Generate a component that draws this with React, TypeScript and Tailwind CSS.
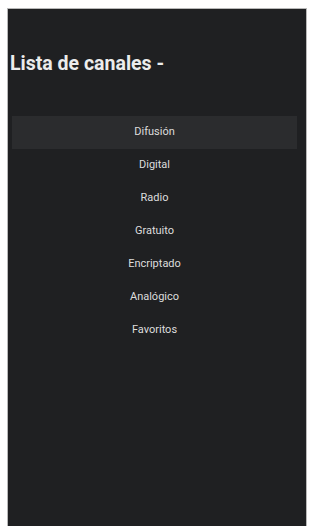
import React from "react";

const channels = [
  "Difusión",
  "Digital",
  "Radio",
  "Gratuito",
  "Encriptado",
  "Analógico",
  "Favoritos",
];

export default function App() {
  const selected = 0;

  return (
    <div className="w-[310px] h-[526px] bg-white overflow-hidden font-['Roboto',sans-serif]">
      <div className="ml-[7px] mt-2 w-[300px] h-[518px] bg-[#1f2022] border border-b-0 border-[#b8b8b8] flex flex-col">
        {/* 제목 */}
        <h1 className="pt-[43px] pl-[2px] text-[19.5px] leading-6 font-bold text-[#ececec]">
          Lista de canales -
        </h1>

        {/* 채널 목록 */}
        <ul className="mt-[40px] ml-1 mr-[9px]">
          {channels.map((name, i) => (
            <li
              key={name}
              className={
                i === selected
                  ? "h-[33px] flex items-center justify-center text-[11px] text-[#dddddd] bg-[#2b2c2e]"
                  : "h-[33px] flex items-center justify-center text-[11px] text-[#dddddd]"
              }
            >
              {name}
            </li>
          ))}
        </ul>
      </div>
    </div>
  );
}
